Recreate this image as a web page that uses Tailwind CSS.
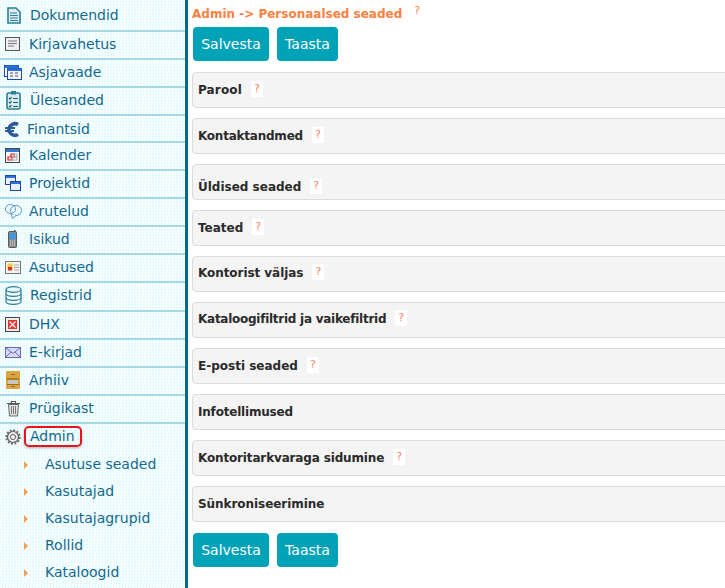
<!DOCTYPE html>
<html>
<head>
<meta charset="utf-8">
<script src="https://cdn.jsdelivr.net/npm/@tailwindcss/browser@4"></script>
</head>
<body class="m-0 overflow-hidden bg-white font-['DejaVu_Sans',sans-serif]">
<div class="flex h-[588px] w-[725px] overflow-hidden">
  <aside class="w-[188px] h-full shrink-0 border-r-[3px] border-[#006a85] bg-[#e6fdff] bg-[repeating-conic-gradient(#ffffff_0%_25%,#dcfbff_0%_50%)] bg-[length:3px_3px] text-[14px] text-[#14688c]">
    <nav class="flex flex-col">
      <a class="flex h-[32px] items-center border-b-[2px] border-[#a8d8e8] pt-[1px]">
        <svg class="ml-[7px] mr-[9px] w-[14px] h-[17px]" viewBox="0 0 14 17"><path d="M1 1h8l4 4v11H1z" fill="#dcecf0" stroke="#2a7f96" stroke-width="1.6"/><path d="M3 6h7M3 8.5h8M3 11h8M3 13.500h8" stroke="#2a7f96" stroke-width="1.2"/></svg>
        <span>Dokumendid</span>
      </a>
      <a class="flex h-[28px] items-center border-b-[2px] border-[#a8d8e8] pb-[2px]">
        <svg class="ml-[5px] mr-[9px] w-[15px] h-[14px]" viewBox="0 0 15 14"><rect x=".5" y=".5" width="14" height="13" fill="#eef0f4" stroke="#555"/><path d="M3 4h9M3 6.500h9M3 9h6" stroke="#777"/></svg>
        <span>Kirjavahetus</span>
      </a>
      <a class="flex h-[28px] items-center border-b-[2px] border-[#a8d8e8] pb-[2px]">
        <svg class="ml-[4px] mr-[7px] w-[18px] h-[15px]" viewBox="0 0 18 15"><rect x=".5" y=".5" width="14" height="11" fill="#fff" stroke="#1c49b0"/><rect x=".5" y=".5" width="14" height="2.500" fill="#2f6fd8"/><rect x="3.500" y="3.500" width="14" height="11" fill="#f2f4fa" stroke="#1c49b0"/><rect x="3.500" y="3.500" width="14" height="2.500" fill="#2f6fd8"/><path d="M6 8h3M11 8h3M6 11h3M11 11h3" stroke="#888" stroke-width="1.400"/></svg>
        <span>Asjavaade</span>
      </a>
      <a class="flex h-[28px] items-center border-b-[2px] border-[#a8d8e8] pb-[2px]">
        <svg class="ml-[6px] mr-[9px] w-[15px] h-[20px]" viewBox="0 0 15 20"><rect x="1" y="3" width="13" height="16" rx="1.500" fill="#d8ecf0" stroke="#2a7f96" stroke-width="1.600"/><rect x="5" y="1" width="5" height="3.500" fill="#2a7f96"/><path d="M3 8l1 1 1.500-2M3 12l1 1 1.500-2M3 16l1 1 1.500-2M7 8.500h5M7 12.500h5M7 16.500h5" stroke="#245f70" fill="none" stroke-width="1.200"/></svg>
        <span>Ülesanded</span>
      </a>
      <a class="flex h-[27px] items-center border-b-[2px] border-[#a8d8e8] pt-[1px]">
        <svg class="ml-[5px] mr-[8px] w-[14px] h-[17px]" viewBox="0 0 14 17"><path d="M13 3.500A6 6 0 0 0 4 8.500 6 6 0 0 0 13 13.500" fill="none" stroke="#2d5ba0" stroke-width="3.600"/><path d="M0 7h10M0 10h9" stroke="#2d5ba0" stroke-width="1.800"/></svg>
        <span>Finantsid</span>
      </a>
      <a class="flex h-[28px] items-center border-b-[2px] border-[#a8d8e8] pb-[2px]">
        <svg class="ml-[5px] mr-[9px] w-[15px] h-[15px]" viewBox="0 0 15 15"><rect x=".5" y=".5" width="14" height="14" fill="#f4f4f4" stroke="#444"/><rect x="1" y="1" width="13" height="3" fill="#2f78d0"/><path d="M3 9h4v3H3zM6 6h3v3H6z" fill="none" stroke="#e8141c" stroke-width="1.200"/><path d="M9 6h3v3H9zM7 9h5v3H7z" fill="none" stroke="#aaa"/></svg>
        <span>Kalender</span>
      </a>
      <a class="flex h-[28px] items-center border-b-[2px] border-[#a8d8e8] pb-[2px]">
        <svg class="ml-[5px] mr-[8px] w-[16px] h-[16px]" viewBox="0 0 16 16"><rect x=".5" y=".5" width="10" height="9" fill="#e8eefa" stroke="#1c49b0"/><rect x="1" y="1" width="9" height="2" fill="#2f6fd8"/><rect x="5.500" y="6.500" width="10" height="9" fill="#e8eefa" stroke="#1c49b0"/><rect x="6" y="7" width="9" height="2" fill="#2f6fd8"/></svg>
        <span>Projektid</span>
      </a>
      <a class="flex h-[28px] items-center border-b-[2px] border-[#a8d8e8] pb-[2px]">
        <svg class="ml-[5px] mr-[7px] w-[17px] h-[15px]" viewBox="0 0 17 15"><ellipse cx="5.500" cy="5" rx="5" ry="4.500" fill="none" stroke="#5c94c8"/><ellipse cx="11" cy="6.500" rx="5.500" ry="5" fill="none" stroke="#5c94c8"/><path d="M6 10l1.500 4.500 3.500-3" fill="#f4faff" stroke="#5c94c8"/></svg>
        <span>Arutelud</span>
      </a>
      <a class="flex h-[28px] items-center border-b-[2px] border-[#a8d8e8] pb-[2px]">
        <svg class="ml-[8px] mr-[12px] w-[9px] h-[18px]" viewBox="0 0 9 18"><rect x=".5" y="1.500" width="8" height="16" rx="1" fill="#8a8a8a" stroke="#5a5a5a"/><rect x="6" y="0" width="1.500" height="2" fill="#555"/><rect x="1.500" y="3" width="6" height="6" fill="#3a9ae8"/><path d="M2 11h5M2 13h5M2 15h5" stroke="#ddd" stroke-dasharray="1 1"/></svg>
        <span>Isikud</span>
      </a>
      <a class="flex h-[28px] items-center border-b-[2px] border-[#a8d8e8] pb-[2px]">
        <svg class="ml-[5px] mr-[8px] w-[16px] h-[13px]" viewBox="0 0 16 13"><rect x=".5" y=".5" width="15" height="12" fill="#f4f4ee" stroke="#777"/><rect x="2.500" y="2.500" width="5" height="6" fill="#f5c840"/><rect x="3" y="6" width="4" height="3.500" fill="#e03030"/><path d="M9 4h5M9 6.500h5M9 9h5" stroke="#aaa"/></svg>
        <span>Asutused</span>
      </a>
      <a class="flex h-[29px] items-center border-b-[2px] border-[#a8d8e8] pb-[2px]">
        <svg class="ml-[5px] mr-[8px] w-[17px] h-[19px]" viewBox="0 0 17 19"><path d="M1 3.500v12c0 1.500 3 2.800 7.500 2.800S16 17 16 15.500v-12" fill="#f0fafc" stroke="#2a7f96" stroke-width="1.200"/><ellipse cx="8.500" cy="3.500" rx="7.500" ry="2.800" fill="#e8f6f8" stroke="#2a7f96" stroke-width="1.200"/><path d="M1 7.500c0 1.500 3 2.800 7.500 2.800S16 9 16 7.500M1 11.500c0 1.500 3 2.800 7.500 2.800s7.500-1.300 7.500-2.800" fill="none" stroke="#2a7f96" stroke-width="1.200"/></svg>
        <span>Registrid</span>
      </a>
      <a class="flex h-[28px] items-center border-b-[2px] border-[#a8d8e8] pb-[2px]">
        <svg class="ml-[5px] mr-[9px] w-[15px] h-[15px]" viewBox="0 0 15 15"><rect x=".5" y=".5" width="14" height="14" fill="#eee" stroke="#444"/><rect x="3" y="3" width="9" height="9" fill="#e8342c"/><path d="M4.500 4.500l6 6M10.500 4.500l-6 6" stroke="#fff" stroke-width="1.200"/></svg>
        <span>DHX</span>
      </a>
      <a class="flex h-[28px] items-center border-b-[2px] border-[#a8d8e8] pb-[2px]">
        <svg class="ml-[5px] mr-[8px] w-[16px] h-[11px]" viewBox="0 0 16 11"><rect x=".5" y=".5" width="15" height="10" fill="#d8d8f8" stroke="#6a6ab8"/><path d="M.5.500L8 6.500 15.500.500M.5 10.500L6 5M15.500 10.500L10 5" fill="none" stroke="#6a6ab8"/></svg>
        <span>E-kirjad</span>
      </a>
      <a class="flex h-[28px] items-center border-b-[2px] border-[#a8d8e8] pb-[2px]">
        <svg class="ml-[6px] mr-[9px] w-[14px] h-[18px]" viewBox="0 0 14 18"><rect width="14" height="18" rx="1" fill="#dca440"/><path d="M1 7h12v2H1z" fill="#b07c20"/><path d="M2 9h10v4H2z" fill="#c8c8c0"/><path d="M1 13h12v1H1zM5 3h4v1H5zM5 15h4v1H5z" fill="#9c6c18"/></svg>
        <span>Arhiiv</span>
      </a>
      <a class="flex h-[28px] items-center border-b-[2px] border-[#a8d8e8] pb-[2px]">
        <svg class="ml-[6px] mr-[8px] w-[15px] h-[17px]" viewBox="0 0 15 17"><path d="M1 3.500h13M5.500 3V1.500h4V3" fill="none" stroke="#555" stroke-width="1.200"/><path d="M2.500 4.500l1 11.500h8l1-11.500z" fill="#e4e4e4" stroke="#666"/><path d="M5.500 6v8M7.500 6v8M9.500 6v8" stroke="#777"/></svg>
        <span>Prügikast</span>
      </a>
      <a class="flex h-[27px] items-center pb-[2px]">
        <svg class="ml-[5px] mr-[3px] w-[16px] h-[16px]" viewBox="0 0 16 16"><circle cx="8" cy="8" r="5.500" fill="#eee" stroke="#555" stroke-width="1.200"/><circle cx="8" cy="8" r="6.800" fill="none" stroke="#666" stroke-width="1.800" stroke-dasharray="2 1.560"/><circle cx="8" cy="8" r="2.500" fill="#fff" stroke="#555"/></svg>
        <span class="rounded-[5px] border-2 border-[#e8141c] pl-[4px] pr-[5px] leading-[17px] shadow-[0_1px_3px_rgba(0,0,0,0.3)]">Admin</span>
      </a>
      <ul class="flex flex-col">
        <li class="flex h-[27px] items-center"><span class="ml-[24px] mr-[17px] h-0 w-0 border-y-[4px] border-l-[4px] border-y-transparent border-l-[#f5a050]"></span>Asutuse seaded</li>
        <li class="flex h-[27px] items-center"><span class="ml-[24px] mr-[17px] h-0 w-0 border-y-[4px] border-l-[4px] border-y-transparent border-l-[#f5a050]"></span>Kasutajad</li>
        <li class="flex h-[27px] items-center"><span class="ml-[24px] mr-[17px] h-0 w-0 border-y-[4px] border-l-[4px] border-y-transparent border-l-[#f5a050]"></span>Kasutajagrupid</li>
        <li class="flex h-[27px] items-center"><span class="ml-[24px] mr-[17px] h-0 w-0 border-y-[4px] border-l-[4px] border-y-transparent border-l-[#f5a050]"></span>Rollid</li>
        <li class="flex h-[27px] items-center"><span class="ml-[24px] mr-[17px] h-0 w-0 border-y-[4px] border-l-[4px] border-y-transparent border-l-[#f5a050]"></span>Kataloogid</li>
      </ul>
    </nav>
  </aside>
  <main class="min-w-0 flex-1 pl-[4px]">
    <div class="flex h-[27px] items-center pt-[1px] text-[12px] font-bold text-[#ff8040]">
      <span>Admin -&gt; Personaalsed seaded</span>
      <span class="ml-[12px] -mt-[5px] text-[11px] font-normal">?</span>
    </div>
    <div class="flex gap-[8px] pl-[1px] text-[14px] text-white">
      <button class="h-[34px] w-[76px] rounded-[4px] bg-[#00a2b8]">Salvesta</button>
      <button class="h-[34px] w-[61px] rounded-[4px] bg-[#00a2b8]">Taasta</button>
    </div>
    <div class="mt-[11px] flex w-[560px] flex-col gap-[10px] text-[12px] font-bold text-[#2a2a2a]">
      <div class="flex h-[36px] items-center rounded-[4px] border border-[#dcdcdc] bg-[#f4f4f4] pl-[5px]"><span class="tracking-[0.15px]">Parool</span><span class="ml-[9px] -mt-[2px] bg-white px-[3px] text-[11px] font-normal text-[#ff8060]">?</span></div>
      <div class="flex h-[36px] items-center rounded-[4px] border border-[#dcdcdc] bg-[#f4f4f4] pl-[5px]"><span class="tracking-[-0.23px]">Kontaktandmed</span><span class="ml-[9px] -mt-[2px] bg-white px-[3px] text-[11px] font-normal text-[#ff8060]">?</span></div>
      <div class="flex h-[36px] items-center rounded-[4px] border border-[#dcdcdc] bg-[#f4f4f4] pl-[5px] pt-[10px]"><span>Üldised seaded</span><span class="ml-[9px] -mt-[2px] bg-white px-[3px] text-[11px] font-normal text-[#ff8060]">?</span></div>
      <div class="flex h-[36px] items-center rounded-[4px] border border-[#dcdcdc] bg-[#f4f4f4] pl-[5px]"><span>Teated</span><span class="ml-[9px] -mt-[2px] bg-white px-[3px] text-[11px] font-normal text-[#ff8060]">?</span></div>
      <div class="flex h-[36px] items-center rounded-[4px] border border-[#dcdcdc] bg-[#f4f4f4] pl-[5px] pb-[2px]"><span class="tracking-[-0.06px]">Kontorist väljas</span><span class="ml-[9px] -mt-[2px] bg-white px-[3px] text-[11px] font-normal text-[#ff8060]">?</span></div>
      <div class="flex h-[36px] items-center rounded-[4px] border border-[#dcdcdc] bg-[#f4f4f4] pl-[5px] pb-[2px]"><span class="tracking-[-0.26px]">Kataloogifiltrid ja vaikefiltrid</span><span class="ml-[9px] -mt-[2px] bg-white px-[3px] text-[11px] font-normal text-[#ff8060]">?</span></div>
      <div class="flex h-[36px] items-center rounded-[4px] border border-[#dcdcdc] bg-[#f4f4f4] pl-[5px]"><span>E-posti seaded</span><span class="ml-[9px] -mt-[2px] bg-white px-[3px] text-[11px] font-normal text-[#ff8060]">?</span></div>
      <div class="flex h-[36px] items-center rounded-[4px] border border-[#dcdcdc] bg-[#f4f4f4] pl-[5px]"><span class="tracking-[-0.2px]">Infotellimused</span></div>
      <div class="flex h-[36px] items-center rounded-[4px] border border-[#dcdcdc] bg-[#f4f4f4] pl-[5px]"><span class="tracking-[-0.15px]">Kontoritarkvaraga sidumine</span><span class="ml-[9px] -mt-[2px] bg-white px-[3px] text-[11px] font-normal text-[#ff8060]">?</span></div>
      <div class="flex h-[36px] items-center rounded-[4px] border border-[#dcdcdc] bg-[#f4f4f4] pl-[5px]"><span class="tracking-[-0.06px]">Sünkroniseerimine</span></div>
    </div>
    <div class="mt-[11px] flex gap-[8px] pl-[1px] text-[14px] text-white">
      <button class="h-[34px] w-[76px] rounded-[4px] bg-[#00a2b8]">Salvesta</button>
      <button class="h-[34px] w-[61px] rounded-[4px] bg-[#00a2b8]">Taasta</button>
    </div>
  </main>
</div>
</body>
</html>
